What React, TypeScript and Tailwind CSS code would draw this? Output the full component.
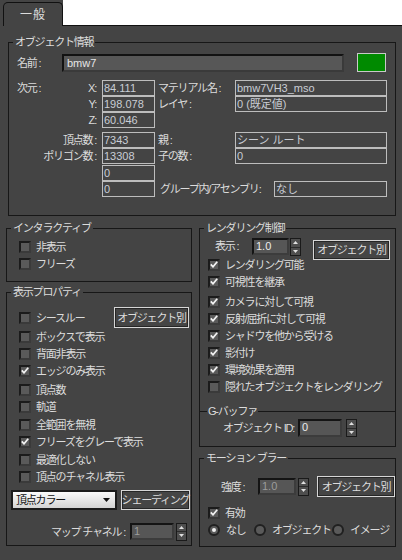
import type { ReactNode } from "react";

const FONT = "font-['Liberation_Sans','Noto_Sans_CJK_JP',sans-serif]";
const JP = "tracking-[-1.2px] whitespace-nowrap";

function Group({
	title,
	className = "",
	children,
}: {
	title: string;
	className?: string;
	children: ReactNode;
}) {
	return (
		<fieldset className={`border border-[#171717] ${className}`}>
			<legend className={`ml-[4px] px-[2px] leading-[14px] ${JP}`}>{title}</legend>
			{children}
		</fieldset>
	);
}

function Box({ checked = false }: { checked?: boolean }) {
	return (
		<span className="flex h-[12px] w-[12px] shrink-0 items-center justify-center border-[2px] border-t-[#1b1b1b] border-l-[#1b1b1b] border-r-[#3a3a3a] border-b-[#3a3a3a] bg-[#5a5a5a]">
			{checked && (
				<svg width="8" height="7" viewBox="0 0 8 7">
					<path d="M0.8 3.4 L3 5.8 L7.2 0.8" fill="none" stroke="#f2f2f2" strokeWidth="1.7" />
				</svg>
			)}
		</span>
	);
}

function CheckRow({
	label,
	checked = false,
	className = "",
}: {
	label: string;
	checked?: boolean;
	className?: string;
}) {
	return (
		<div className={`flex h-[17px] items-center gap-[5px] ${className}`}>
			<Box checked={checked} />
			<span className={JP}>{label}</span>
		</div>
	);
}

function Radio({ label, on = false, className = "" }: { label: string; on?: boolean; className?: string }) {
	return (
		<div className={`flex items-center gap-[6px] ${className}`}>
			<span className="flex h-[12px] w-[12px] items-center justify-center rounded-full border-[2px] border-[#202020] bg-[#5a5a5a]">
				{on && <span className="h-[4px] w-[4px] rounded-full bg-[#f0f0f0]" />}
			</span>
			<span className={JP}>{label}</span>
		</div>
	);
}

function Field({ value, className = "" }: { value: string; className?: string }) {
	return (
		<div
			className={`h-[16px] overflow-hidden whitespace-nowrap border border-[#bdbdbd] px-[1px] leading-[14px] text-[#c9cdd4] ${className}`}
		>
			{value}
		</div>
	);
}

function Arrows({ className = "" }: { className?: string }) {
	return (
		<div className={`flex h-[18px] w-[11px] flex-col border border-[#1a1a1a] bg-[#4e4e4e] ${className}`}>
			<div className="flex flex-1 items-center justify-center border-b border-[#2a2a2a]">
				<svg width="5" height="3" viewBox="0 0 5 3">
					<path d="M0 3 L2.5 0 L5 3Z" fill="#e0e0e0" />
				</svg>
			</div>
			<div className="flex flex-1 items-center justify-center">
				<svg width="5" height="3" viewBox="0 0 5 3">
					<path d="M0 0 L5 0 L2.5 3Z" fill="#e0e0e0" />
				</svg>
			</div>
		</div>
	);
}

function SpinBox({ value, dim = false, className = "" }: { value: string; dim?: boolean; className?: string }) {
	return (
		<div
			className={`h-[17px] border-[2px] border-t-[#141414] border-l-[#141414] border-r-[#3c3c3c] border-b-[#3c3c3c] bg-[#565656] pl-[2px] leading-[13px] ${
				dim ? "text-[#9c9c9c]" : "text-[#ececec]"
			} ${className}`}
		>
			{value}
		</div>
	);
}

function Btn({ label, className = "" }: { label: string; className?: string }) {
	return (
		<div
			className={`flex items-center justify-center border border-[#d6d6d6] bg-[#454545] shadow-[inset_0_0_0_1px_#262626] ${JP} ${className}`}
		>
			{label}
		</div>
	);
}

function DimRow({
	left = "",
	axis = "",
	v,
	l2,
	v2,
	className = "",
}: {
	left?: string;
	axis?: string;
	v: string;
	l2?: string;
	v2?: string;
	className?: string;
}) {
	return (
		<div className={`flex h-[16px] items-center ${className}`}>
			<div className="flex w-[85px] justify-between pr-[6px]">
				<span className={JP}>{left}</span>
				<span className={JP}>{axis}</span>
			</div>
			<Field value={v} className="w-[53px]" />
			{l2 !== undefined && (
				<>
					<span className={`w-[80px] pl-[3px] ${JP}`}>{l2}</span>
					<Field value={v2 ?? ""} className="w-[152px]" />
				</>
			)}
		</div>
	);
}

function TabBar() {
	return (
		<div className="flex h-[26px]">
			<div className="flex w-[63px] bg-[#444444] pl-[3px] pt-[2px]">
				<div className="flex h-[24px] w-[60px] items-center justify-center rounded-t-[5px] border border-b-0 border-[#111111] text-[12px] tracking-[1px]">
					一般
				</div>
			</div>
			<div className="flex-1 border-b border-[#111111] bg-white" />
		</div>
	);
}

function ObjectInfo() {
	return (
		<Group title="オブジェクト情報" className="ml-[2px] mt-[9px]">
			<div className="pb-[18px] pl-[8px] pr-[7px]">
				<div className="mt-[4px] flex h-[19px] items-center">
					<span className={`w-[45px] ${JP}`}>名前 :</span>
					<div className="h-[18px] w-[282px] border-[2px] border-t-[#121212] border-l-[#121212] border-r-[#3a3a3a] border-b-[#3a3a3a] bg-[#575757] pl-[3px] leading-[14px] text-[#e6e6e6]">
						bmw7
					</div>
					<div className="ml-[13px] h-[19px] w-[29px] border border-[#c8c8c8] bg-[#008a00]" />
				</div>
				<div className="mt-[8px] flex flex-col">
					<DimRow left="次元 :" axis="X:" v="84.111" l2="マテリアル名 :" v2="bmw7VH3_mso" />
					<DimRow axis="Y:" v="198.078" l2="レイヤ :" v2="0 (既定値)" />
					<DimRow axis="Z:" v="60.046" />
					<DimRow axis="頂点数 :" v="7343" l2="親 :" v2="シーン ルート" className="mt-[4px]" />
					<DimRow axis="ポリゴン数 :" v="13308" l2="子の数 :" v2="0" />
					<DimRow v="0" className="mt-[1px]" />
					<div className="flex h-[16px] items-center">
						<div className="w-[85px]" />
						<Field value="0" className="w-[53px]" />
						<span className={`w-[119px] pl-[5px] ${JP}`}>グループ内/アセンブリ:</span>
						<Field value="なし" className="w-[113px]" />
					</div>
				</div>
			</div>
		</Group>
	);
}

function LeftColumn() {
	return (
		<div className="flex w-[186px] flex-col">
			<Group title="インタラクティブ">
				<div className="pb-[9px] pl-[12px] pt-[3px]">
					<CheckRow label="非表示" />
					<CheckRow label="フリーズ" />
				</div>
			</Group>
			<Group title="表示プロパティ" className="mt-[3px]">
				<div className="pb-[5px] pl-[12px] pr-[2px] pt-[8px]">
					<div className="flex h-[21px] items-center justify-between">
						<div className="flex items-center gap-[5px]">
							<Box />
							<span className={JP}>シースルー</span>
						</div>
						<Btn label="オブジェクト別" className="h-[21px] w-[75px]" />
					</div>
					<CheckRow label="ボックスで表示" />
					<CheckRow label="背面非表示" />
					<CheckRow label="エッジのみ表示" checked />
					<CheckRow label="頂点数" className="mt-[2px]" />
					<CheckRow label="軌道" />
					<CheckRow label="全範囲を無視" className="mt-[1px]" />
					<CheckRow label="フリーズをグレーで表示" checked />
					<CheckRow label="最適化しない" className="mt-[1px]" />
					<CheckRow label="頂点のチャネル表示" />
				</div>
				<div className="flex h-[20px] items-center gap-[4px] pl-[4px]">
					<div className="flex h-[20px] w-[106px] items-center justify-between border-[2px] border-[#1c1c1c] bg-gradient-to-b from-[#fbfbfb] to-[#d4d4d4] pl-[3px] pr-[5px] text-[#111111]">
						<span className={JP}>頂点カラー</span>
						<svg width="7" height="4" viewBox="0 0 7 4">
							<path d="M0 0 L7 0 L3.5 4Z" fill="#111111" />
						</svg>
					</div>
					<Btn label="シェーディング" className="h-[20px] w-[69px]" />
				</div>
				<div className="mt-[13px] flex h-[17px] items-center justify-end pr-[4px]">
					<span className={JP}>マップ チャネル :</span>
					<SpinBox value="1" dim className="ml-[5px] w-[44px]" />
					<Arrows className="ml-[2px]" />
				</div>
				<div className="h-[5px]" />
			</Group>
		</div>
	);
}

function RightColumn() {
	return (
		<div className="flex w-[197px] flex-col">
			<Group title="レンダリング制御">
				<div className="pl-[15px] pt-[3px]">
					<div className="flex h-[18px] items-start">
						<span className={`w-[37px] leading-[17px] ${JP}`}>表示 :</span>
						<SpinBox value="1.0" className="w-[37px]" />
						<Arrows className="ml-[1px]" />
						<Btn label="オブジェクト別" className="ml-[12px] mt-[2px] h-[20px] w-[77px]" />
					</div>
				</div>
				<div className="pl-[8px]">
					<CheckRow label="レンダリング可能" checked />
					<CheckRow label="可視性を継承" checked />
					<CheckRow label="カメラに対して可視" checked className="mt-[3px]" />
					<CheckRow label="反射/屈折に対して可視" checked />
					<CheckRow label="シャドウを他から受ける" checked />
					<CheckRow label="影付け" checked />
					<CheckRow label="環境効果を適用" checked />
					<CheckRow label="隠れたオブジェクトをレンダリング" />
				</div>
				<div className="mt-[9px] flex h-[14px] items-center">
					<div className="h-px w-[7px] bg-[#171717]" />
					<span className={`px-[1px] ${JP}`}>G-バッファ</span>
					<div className="h-px flex-1 bg-[#171717]" />
				</div>
				<div className="mt-[1px] flex h-[18px] items-center pl-[23px]">
					<span className={`w-[75px] ${JP}`}>オブジェクト ID:</span>
					<SpinBox value="0" className="h-[18px] w-[44px]" />
					<Arrows className="ml-[4px]" />
				</div>
				<div className="h-[9px]" />
			</Group>
			<Group title="モーション ブラー" className="mt-[4px]">
				<div className="mt-[11px] flex h-[21px] items-center pl-[21px]">
					<span className={`w-[37px] ${JP}`}>強度 :</span>
					<SpinBox value="1.0" dim className="w-[38px]" />
					<Arrows className="ml-[2px] w-[9px]" />
					<Btn label="オブジェクト別" className="ml-[8px] h-[21px] w-[78px]" />
				</div>
				<div className="pl-[8px]">
					<CheckRow label="有効" checked className="mt-[7px]" />
					<div className="flex h-[17px] items-center">
						<Radio label="なし" on className="w-[46px]" />
						<Radio label="オブジェクト" className="w-[78px]" />
						<Radio label="イメージ" />
					</div>
				</div>
				<div className="h-[8px]" />
			</Group>
		</div>
	);
}

export default function App() {
	return (
		<div
			className={`h-[560px] w-[402px] overflow-hidden bg-[#444444] text-[11px] leading-[14px] text-[#dcdcdc] ${FONT}`}
		>
			<TabBar />
			<div className="px-[6px]">
				<ObjectInfo />
				<div className="mt-[5px] flex gap-[7px]">
					<LeftColumn />
					<RightColumn />
				</div>
			</div>
		</div>
	);
}
